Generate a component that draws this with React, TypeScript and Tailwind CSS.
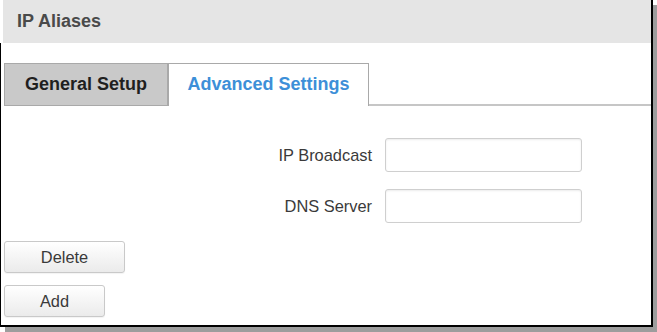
import React from 'react';

const font = { fontFamily: '"Liberation Sans", Arial, sans-serif' };

const Field = ({ label }: { label: string }) => (
  <div className="flex items-center">
    <label className="w-[381px] pr-[13px] text-right text-[16.4px] text-[#3a3a3a]">{label}</label>
    <input
      type="text"
      className="h-[34px] w-[197px] rounded-[3px] border border-[#cfcfcf] bg-white shadow-[inset_0_1px_2px_rgba(0,0,0,0.08)] outline-none"
    />
  </div>
);

const Btn = ({ children, w }: { children: React.ReactNode; w: string }) => (
  <button
    className={`${w} h-[32px] rounded-[3px] border border-[#c9c9c9] bg-gradient-to-b from-white to-[#ebebeb] text-[16.4px] text-[#3a3a3a] shadow-[0_1px_1px_rgba(0,0,0,0.05)]`}
  >
    {children}
  </button>
);

export default function App() {
  return (
    <div className="h-[332px] w-[657px] bg-white" style={font}>
      <div className="h-[327px] w-[653px] border-r-2 border-b-2 border-black shadow-[5px_5px_0_#9d9d9d] flex flex-col bg-white">
        <div className="ml-[3px] flex h-[43px] items-center bg-[#e5e5e5] pl-[14px]">
          <span className="text-[18px] font-bold text-[#4a4a4a]">IP Aliases</span>
        </div>
        <div className="flex flex-1 flex-col border-l border-black pl-[3px]">
          <div className="mt-[20px] flex h-[43px] items-stretch">
            <div className="flex w-[164px] items-center justify-center border border-[#a9a9a9] bg-[#c9c9c9] pb-[1px] text-[18px] font-bold text-[#1f1f1f]">
              General Setup
            </div>
            <div className="flex w-[201px] items-center justify-center border-x border-t border-[#a9a9a9] bg-white pb-[1px] text-[18px] font-bold text-[#3d8fd8]">
              Advanced Settings
            </div>
            <div className="flex-1 border-b-2 border-[#c6c6c6]" />
          </div>
          <div className="mt-[32px] flex flex-col gap-[17px]">
            <Field label="IP Broadcast" />
            <Field label="DNS Server" />
          </div>
          <div className="mt-[18px] flex flex-col items-start gap-[12px]">
            <Btn w="w-[121px]">Delete</Btn>
            <Btn w="w-[101px]">Add</Btn>
          </div>
        </div>
      </div>
    </div>
  );
}
